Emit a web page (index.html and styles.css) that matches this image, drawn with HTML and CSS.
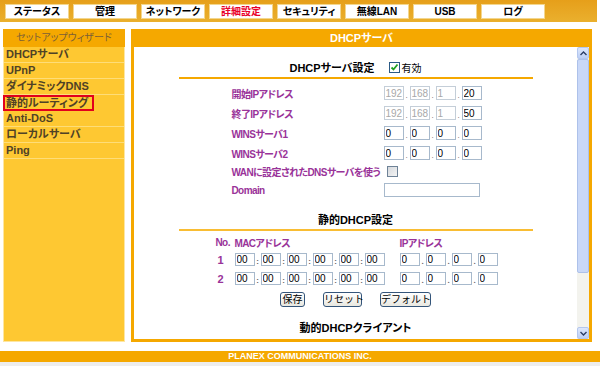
FILE: index.html
```html
<!DOCTYPE html>
<html lang="ja">

<head>
  <meta charset="UTF-8">
  <title>DHCPサーバ</title>
  <link rel="stylesheet" href="styles.css">
</head>

<body>
<div class="top">
  <ul class="tabs">
    <li>ステータス</li>
    <li>管理</li>
    <li>ネットワーク</li>
    <li class="current">詳細設定</li>
    <li>セキュリティ</li>
    <li>無線LAN</li>
    <li>USB</li>
    <li>ログ</li>
  </ul>
</div>

<div class="main">
  <!-- 左メニュー -->
  <div class="side">
    <div class="side-head">セットアップウィザード</div>
    <ul class="menu">
      <li>DHCPサーバ</li>
      <li>UPnP</li>
      <li>ダイナミックDNS</li>
      <li class="current"><span>静的ルーティング</span></li>
      <li>Anti-DoS</li>
      <li>ローカルサーバ</li>
      <li>Ping</li>
    </ul>
  </div>

  <!-- 設定パネル -->
  <div class="panel">
    <div class="panel-head">DHCPサーバ</div>
    <div class="panel-body">
      <div class="content">
        <div class="sec">
          <div class="sec-title">
            DHCPサーバ設定
            <span class="check on"><svg width="9" height="9" viewBox="0 0 9 9"><path d="M1.5 4.5 L3.5 6.5 L7.5 1.5" fill="none" stroke="#21a121" stroke-width="1.8"/></svg></span>
            <span class="check-label">有効</span>
          </div>

          <div class="row">
            <label>開始IPアドレス</label>
            <div class="ip">
              <input disabled value="192"><span class="dot">.</span><input disabled value="168"><span class="dot">.</span><input disabled value="1"><span class="dot">.</span><input value="20">
            </div>
          </div>
          <div class="row">
            <label>終了IPアドレス</label>
            <div class="ip">
              <input disabled value="192"><span class="dot">.</span><input disabled value="168"><span class="dot">.</span><input disabled value="1"><span class="dot">.</span><input value="50">
            </div>
          </div>
          <div class="row">
            <label>WINSサーバ1</label>
            <div class="ip">
              <input value="0"><span class="dot">.</span><input value="0"><span class="dot">.</span><input value="0"><span class="dot">.</span><input value="0">
            </div>
          </div>
          <div class="row">
            <label>WINSサーバ2</label>
            <div class="ip">
              <input value="0"><span class="dot">.</span><input value="0"><span class="dot">.</span><input value="0"><span class="dot">.</span><input value="0">
            </div>
          </div>
          <div class="row row-wan">
            <label>WANに設定されたDNSサーバを使う</label>
            <span class="check off"></span>
          </div>
          <div class="row">
            <label>Domain</label>
            <input class="domain" value="">
          </div>

          <div class="sec-title second">静的DHCP設定</div>

          <div class="tbl-head">
            <span class="no">No.</span>
            <span class="mac-h">MACアドレス</span>
            <span>IPアドレス</span>
          </div>
          <div class="tbl-row">
            <span class="no">1</span>
            <div class="mac">
              <input value="00"><span class="dot">:</span><input value="00"><span class="dot">:</span><input value="00"><span class="dot">:</span><input value="00"><span class="dot">:</span><input value="00"><span class="dot">:</span><input value="00">
            </div>
            <div class="ip">
              <input value="0"><span class="dot">.</span><input value="0"><span class="dot">.</span><input value="0"><span class="dot">.</span><input value="0">
            </div>
          </div>
          <div class="tbl-row">
            <span class="no">2</span>
            <div class="mac">
              <input value="00"><span class="dot">:</span><input value="00"><span class="dot">:</span><input value="00"><span class="dot">:</span><input value="00"><span class="dot">:</span><input value="00"><span class="dot">:</span><input value="00">
            </div>
            <div class="ip">
              <input value="0"><span class="dot">.</span><input value="0"><span class="dot">.</span><input value="0"><span class="dot">.</span><input value="0">
            </div>
          </div>

          <div class="btns">
            <button class="b-save">保存</button>
            <button class="b-reset">リセット</button>
            <button class="b-def">デフォルト</button>
          </div>

          <div class="sec-title third">動的DHCPクライアント</div>
        </div>
      </div>

      <!-- スクロールバー -->
      <div class="sb">
        <div class="sb-btn"><svg width="7" height="5" viewBox="0 0 7 5"><path d="M0.5 4 L3.5 1 L6.5 4" fill="none" stroke="#2d3e66" stroke-width="1.4"/></svg></div>
        <div class="sb-thumb"></div>
        <div class="sb-track"></div>
        <div class="sb-btn"><svg width="7" height="5" viewBox="0 0 7 5"><path d="M0.5 1 L3.5 4 L6.5 1" fill="none" stroke="#2d3e66" stroke-width="1.4"/></svg></div>
      </div>
    </div>
  </div>
</div>

<div class="foot">PLANEX COMMUNICATIONS INC.</div>
<div class="bottom"></div>
</body>

</html>
```

FILE: styles.css
```css
* {
  padding: 0;
  margin: 0;
  list-style: none;
  box-sizing: border-box;
}

body {
  width: 600px;
  height: 366px;
  overflow: hidden;
  background: #fff;
  font-family: "Liberation Sans", "Noto Sans CJK JP", sans-serif;
  font-size: 11px;
  color: #000;
  font-feature-settings: "palt";
}

/* 上のタブ */
.top {
  width: 597px;
  height: 22px;
  padding: 4px 0 0 5px;
  background: linear-gradient(#e69f1a, #eab02e);
}

.tabs {
  display: flex;
  gap: 4px;
}

.tabs li {
  width: 64px;
  height: 15px;
  background: #fff;
  border: 1px solid #f3d68e;
  text-align: center;
  font-weight: bold;
  font-size: 10px;
  line-height: 13px;
}

.tabs li.current {
  color: #e8002a;
}

/* メイン */
.main {
  display: flex;
  gap: 6px;
  height: 313px;
  margin-top: 7px;
  padding-left: 3px;
}

.side {
  width: 122px;
  background: #fec832;
  border: 1px solid #fde6a2;
}

.side-head {
  height: 18px;
  margin: -1px -1px 0;
  background: #f5a800;
  color: #7c6036;
  text-align: center;
  line-height: 18px;
  font-size: 10px;
}

.menu li {
  height: 16px;
  padding-left: 2px;
  border-bottom: 1px solid #fedd78;
  line-height: 15px;
  font-weight: bold;
  color: #4f4226;
}

.menu li.current {
  padding: 0;
  border-bottom: 0;
}

.menu li.current span {
  display: block;
  width: 91px;
  height: 16px;
  margin-left: -1px;
  padding-left: 1px;
  border: 2px solid #e2001c;
  line-height: 12px;
}

.panel {
  display: flex;
  flex-direction: column;
  width: 461px;
  padding: 0 3px 3px;
  background: #f5a800;
}

.panel-head {
  height: 18px;
  color: #fff;
  font-weight: bold;
  text-align: center;
  line-height: 18px;
}

.panel-body {
  display: flex;
  flex: 1;
  background: #fff;
}

.content {
  flex: 1;
  overflow: hidden;
}

.sec {
  width: 354px;
  margin: 0 auto;
}

.sec-title {
  display: flex;
  align-items: center;
  justify-content: center;
  height: 32px;
  padding-top: 10px;
  border-bottom: 2px solid #f5a800;
  font-weight: bold;
  font-size: 11px;
}

.sec-title.second {
  height: 31px;
  padding-top: 8px;
  border-bottom-color: #f9bd33;
}

.sec-title.third {
  height: 30px;
  padding-top: 10px;
  border-bottom: 0;
}

.check {
  display: inline-flex;
  align-items: center;
  justify-content: center;
  width: 11px;
  height: 11px;
}

.check.on {
  margin-left: 14px;
  border: 1px solid #2b5a86;
  background: #fff;
}

.check-label {
  margin-left: 2px;
  font-weight: normal;
  font-size: 10px;
}

.check.off {
  border: 1px solid #6e8297;
  background: linear-gradient(135deg, #d6d9de, #f4f4f4);
}

.row {
  display: flex;
  align-items: center;
  height: 20px;
}

.row:nth-child(2) {
  margin-top: 4px;
}

.row-wan {
  height: 17px;
}

.row label {
  width: 205px;
  padding-left: 53px;
  color: #993399;
  font-weight: bold;
  font-size: 10px;
  letter-spacing: -0.6px;
  white-space: nowrap;
}

.row-wan label {
  width: 208px;
}

input {
  width: 20px;
  height: 14px;
  padding: 0 1px;
  border: 1px solid #a7b9cc;
  background: #fff;
  font-family: "Liberation Sans", sans-serif;
  font-size: 10px;
  color: #000;
  outline: none;
}

input:disabled {
  border-color: #c4ced8;
  color: #a8a8a8;
}

input.domain {
  width: 96px;
}

.ip,
.mac {
  display: flex;
  align-items: flex-end;
}

.dot {
  width: 6px;
  text-align: center;
  font-size: 8px;
  line-height: 8px;
  color: #666;
}

.tbl-head {
  display: flex;
  height: 16px;
  margin-top: 3px;
  padding-left: 37px;
  align-items: center;
  color: #993399;
  font-weight: bold;
  font-size: 10px;
  letter-spacing: -0.6px;
}

.tbl-head .mac-h {
  width: 165px;
}

.no {
  width: 19px;
}

.tbl-row {
  display: flex;
  align-items: center;
  height: 19px;
  padding-left: 37px;
  color: #993399;
  font-weight: bold;
  font-size: 11px;
}

.tbl-row .no {
  padding-left: 2px;
}

.tbl-row input {
  height: 13px;
}

.tbl-row .mac {
  margin-right: 15px;
}

.btns {
  display: flex;
  justify-content: center;
  gap: 18px;
  margin-top: 4px;
}

button {
  height: 15px;
  padding: 0;
  border: 1px solid #34557a;
  border-radius: 3px;
  background: linear-gradient(#fff, #e9e8e0);
  font-family: "Liberation Sans", "Noto Sans CJK JP", sans-serif;
  font-size: 10px;
  line-height: 13px;
  color: #000;
  white-space: nowrap;
}

.b-save {
  width: 25px;
}

.b-reset {
  width: 39px;
}

.b-def {
  width: 51px;
}

/* スクロールバー */
.sb {
  display: flex;
  flex-direction: column;
  width: 12px;
  background: #f3f3ee;
}

.sb-btn {
  display: flex;
  align-items: center;
  justify-content: center;
  height: 12px;
  border: 1px solid #b4c7ee;
  border-radius: 2px;
  background: linear-gradient(#dde7fc, #bccff5);
}

.sb-thumb {
  height: 214px;
  border: 1px solid #adc1ea;
  border-radius: 2px;
  background: #c9d8f8;
}

.sb-track {
  flex: 1;
}

/* フッター */
.foot {
  height: 11px;
  margin-top: 9px;
  background: #f5a800;
  color: #fff;
  text-align: center;
  font-weight: bold;
  font-size: 9px;
  line-height: 11px;
}

.bottom {
  height: 4px;
  background: #ededed;
}
```
